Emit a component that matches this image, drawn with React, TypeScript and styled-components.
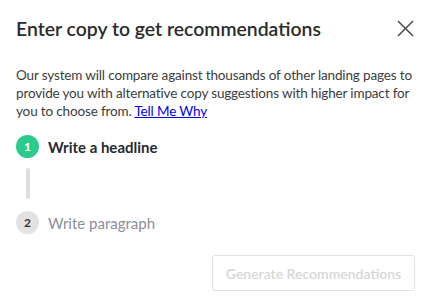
import React from 'react';
import styled, { createGlobalStyle } from 'styled-components';

const GlobalStyle = createGlobalStyle`
    html, body {
        margin: 0;
        padding: 0;
        background: #ffffff;
    }
    body {
        font-family: Lato, "Open Sans", sans-serif;
        -webkit-font-smoothing: antialiased;
    }
`;

interface Step {
    label: string;
    active: boolean;
}

const steps: Step[] = [
    { label: 'Write a headline', active: true },
    { label: 'Write paragraph', active: false }
];

const CloseIcon = () => (
    <svg width="17" height="17" viewBox="0 0 17 17" fill="none">
        <path d="M1 1L16 16M16 1L1 16" stroke="#4a4a4a" strokeWidth="1.5" />
    </svg>
);

const App: React.FC = () => {
    return (
        <>
            <GlobalStyle />
            <StyledModal>
                <StyledHeader>
                    <StyledTitle>Enter copy to get recommendations</StyledTitle>
                    <StyledClose aria-label="Close">
                        <CloseIcon />
                    </StyledClose>
                </StyledHeader>
                <StyledDescription>
                    Our system will compare against thousands of other landing pages to
                    provide you with alternative copy suggestions with higher impact for
                    you to choose from. <StyledLink href="#">Tell Me Why</StyledLink>
                </StyledDescription>
                <StyledSteps>
                    {steps.map((step, i) => (
                        <React.Fragment key={step.label}>
                            {i > 0 && <StyledConnector />}
                            <StyledStep>
                                <StyledBadge active={step.active}>{i + 1}</StyledBadge>
                                <StyledStepLabel active={step.active}>
                                    {step.label}
                                </StyledStepLabel>
                            </StyledStep>
                        </React.Fragment>
                    ))}
                </StyledSteps>
                <StyledFooter>
                    <StyledButton disabled>Generate Recommendations</StyledButton>
                </StyledFooter>
            </StyledModal>
        </>
    );
};

const StyledModal = styled.div`
    width: 429px;
    height: 305px;
    box-sizing: border-box;
    padding: 14px 14px 0 16px;
    display: flex;
    flex-direction: column;
    background: #fff;
`;

const StyledHeader = styled.div`
    display: flex;
    align-items: center;
    justify-content: space-between;
    height: 28px;
`;

const StyledTitle = styled.h2`
    margin: 0;
    font-size: 19.4px;
    font-weight: 600;
    color: #2b2b2b;
`;

const StyledClose = styled.button`
    border: none;
    background: none;
    padding: 0;
    margin-right: 1px;
    display: flex;
    cursor: pointer;
`;

const StyledDescription = styled.p`
    margin: 24px 0 0;
    font-size: 13.5px;
    line-height: 18px;
    letter-spacing: -0.15px;
    color: #3c3c3c;
`;

const StyledLink = styled.a`
    color: #0000ee;
    text-decoration: underline;
`;

const StyledSteps = styled.div`
    display: flex;
    flex-direction: column;
    margin-top: 15px;
`;

const StyledStep = styled.div`
    display: flex;
    align-items: center;
    gap: 9px;
`;

const StyledBadge = styled.span<{ active: boolean }>`
    width: 23px;
    height: 23px;
    border-radius: 50%;
    display: flex;
    align-items: center;
    justify-content: center;
    font-size: 12px;
    font-weight: 700;
    background: ${props => (props.active ? '#2bcb8e' : '#e2e2e2')};
    color: ${props => (props.active ? '#ffffff' : '#333333')};
`;

const StyledStepLabel = styled.span<{ active: boolean }>`
    font-size: 15px;
    font-weight: ${props => (props.active ? 700 : 400)};
    color: ${props => (props.active ? '#262a33' : '#8a8f99')};
`;

const StyledConnector = styled.div`
    width: 4px;
    height: 31px;
    border-radius: 2px;
    background: #dedede;
    margin: 10px 0 12px 9.5px;
`;

const StyledFooter = styled.div`
    display: flex;
    justify-content: flex-end;
    margin-top: 21px;
`;

const StyledButton = styled.button`
    width: 203px;
    height: 36px;
    border: 1px solid #e0e0e0;
    border-radius: 3px;
    background: #fff;
    color: #d6d6d6;
    font-family: Lato, "Open Sans", sans-serif;
    font-size: 14px;
    font-weight: 600;
`;

export default App;
